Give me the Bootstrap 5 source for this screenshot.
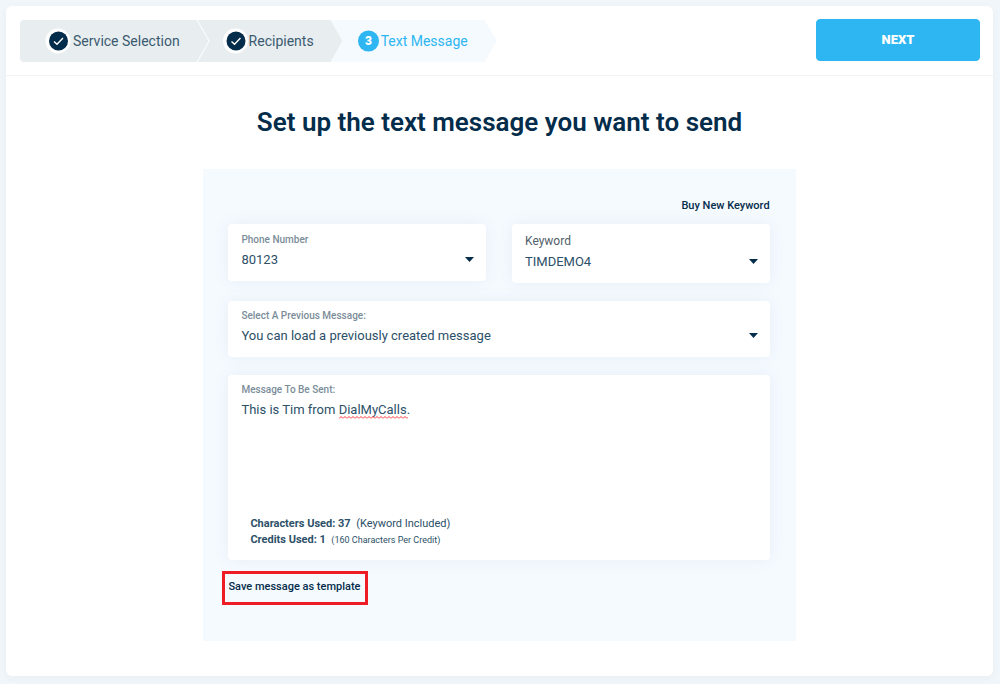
<!DOCTYPE html>
<html lang="en">
<head>
<meta charset="utf-8">
<meta name="viewport" content="width=device-width, initial-scale=1">
<title>Text Message</title>
<link href="https://cdn.jsdelivr.net/npm/bootstrap@5.3.0/dist/css/bootstrap.min.css" rel="stylesheet">
<style>
  :root { --navy: #042c4b; --ink: #2c5068; --sky: #2db6f2; --pale: #f5faff; }
  body { font-family: Roboto, "Liberation Sans", sans-serif; font-size: 14px; line-height: 20px; color: var(--ink); background: #f1f6fa; }
  .page-wrap { padding: 6px 7px 8px 6px; }
  .sheet { border-radius: 6px; box-shadow: 0 2px 8px rgba(20, 60, 80, .04); min-height: calc(100vh - 14px); }
  .top-bar { padding: 13px 13px 13px 14px; border-bottom: 1px solid #f1f4f5; }

  .steps { font-size: 14px; padding-top: 1px; }
  .step { height: 42px; background: #e8edef; clip-path: polygon(0 0, calc(100% - 12px) 0, 100% 50%, calc(100% - 12px) 100%, 0 100%, 12px 50%); padding: 0 29px 0 25px; margin-left: -11px; color: #3b5a70; }
  .step:first-child { clip-path: polygon(0 0, calc(100% - 12px) 0, 100% 50%, calc(100% - 12px) 100%, 0 100%); margin-left: 0; border-radius: 4px 0 0 4px; }
  .step.current { background: var(--pale); color: var(--sky); margin-left: -12px; padding-left: 27px; }
  .step a { color: inherit; }
  .step svg { display: block; }

  .btn-next { --bs-btn-bg: var(--sky); --bs-btn-border-color: var(--sky); --bs-btn-color: #fff; --bs-btn-hover-bg: #1ea6e2; --bs-btn-hover-color: #fff; width: 164px; height: 42px; border-radius: 4px; font-size: 13px; font-weight: 900; }

  h1 { font-size: 26px; line-height: 32px; font-weight: 600; color: var(--navy); margin: 30px 0 31px; }
  .panel { width: 60%; min-width: 300px; margin: 0 auto 35px; padding: 25px 26px 36px 25px; background: #f5faff; }
  .text-link { font-size: 11px; line-height: 20px; font-weight: 500; color: var(--navy); text-decoration: none; }
  .pair { --bs-gutter-x: 26px; }
  .pair, .stacked { margin-bottom: 18px; }
  .cell { background: #fff; border-radius: 4px; box-shadow: 0 0 16px rgba(60, 100, 130, .08); padding: 8px 12px 10px 13px; }
  .cell label { display: block; font-size: 10px; line-height: 16px; font-weight: 500; color: #7b8d99; }
  .cell label.wide-label { font-size: 12px; line-height: 18px; font-weight: 400; color: #52606a; }
  .cell select, .cell textarea { display: block; width: 100%; border: 0; padding: 0; margin: 0; background: transparent; color: var(--ink); font-size: 13px; line-height: 20px; outline: 0; }
  .cell select { height: 23px; appearance: none; background: url("data:image/svg+xml,%3Csvg xmlns='http://www.w3.org/2000/svg' width='9' height='5'%3E%3Cpath d='M0 0h9L4.500 5z' fill='%23042c4b'/%3E%3C/svg%3E") right center no-repeat; }
  .cell textarea { height: 116px; resize: none; }
  .stacked, .message-cell { padding-top: 7px; }
  .message-cell { padding-bottom: 12px; }
  .message-cell label { margin-bottom: 2px; }
  .squiggle { position: absolute; left: 98px; top: 16px; width: 69px; height: 3px; pointer-events: none; }
  .counts { font-size: 11px; line-height: 16px; padding-left: 9px; }
  .counts .note { font-size: 9px; }
  .save-box { border: 3px solid #ee1c25; background: transparent; padding: 3px 5px 5px 3px; margin: 11px 0 0 -6px; }
</style>
</head>
<body>
<div class="page-wrap">
  <main class="sheet bg-white d-flow-root overflow-hidden">
    <header class="top-bar d-flex justify-content-between align-items-start">
      <ol class="steps list-unstyled d-flex mb-0">
        <li class="step d-flex align-items-center">
          <svg width="28" height="26" viewBox="0 0 28 26" aria-hidden="true"><circle cx="13" cy="13" r="12.500" fill="#fff"/><circle cx="13.500" cy="13" r="9.500" fill="#042c4b"/><path d="M9 13.500l3 2.800 6-6.300" fill="none" stroke="#fff" stroke-width="1.400"/></svg>
          <a href="#" class="text-decoration-none">Service Selection</a>
        </li>
        <li class="step d-flex align-items-center">
          <svg width="26" height="26" viewBox="0 0 26 26" aria-hidden="true"><circle cx="12.500" cy="13" r="12.500" fill="#fff"/><circle cx="13" cy="13" r="9.500" fill="#042c4b"/><path d="M8.500 13.500l3 2.800 6-6.300" fill="none" stroke="#fff" stroke-width="1.400"/></svg>
          <a href="#" class="text-decoration-none">Recipients</a>
        </li>
        <li class="step current d-flex align-items-center" aria-current="step">
          <svg width="23" height="22" viewBox="0 0 23 22" aria-hidden="true"><circle cx="10.500" cy="11" r="10.500" fill="#2db6f2"/><text x="10.500" y="15" text-anchor="middle" font-size="12" font-weight="900" fill="#fff">3</text></svg>
          <span>Text Message</span>
        </li>
      </ol>
      <button type="button" class="btn btn-next">NEXT</button>
    </header>

    <h1 class="text-center">Set up the text message you want to send</h1>

    <form class="panel">
      <div class="text-end mb-2"><a href="#" class="text-link">Buy New Keyword</a></div>
      <div class="row pair align-items-start">
        <div class="col-6">
          <div class="cell">
            <label for="phone">Phone Number</label>
            <select id="phone"><option>80123</option></select>
          </div>
        </div>
        <div class="col-6">
          <div class="cell">
            <label for="keyword" class="wide-label">Keyword</label>
            <select id="keyword"><option>TIMDEMO4</option></select>
          </div>
        </div>
      </div>
      <div class="cell stacked">
        <label for="previous">Select A Previous Message:</label>
        <select id="previous"><option>You can load a previously created message</option></select>
      </div>
      <div class="cell message-cell">
        <label for="message">Message To Be Sent:</label>
        <div class="position-relative">
          <textarea id="message" spellcheck="false">This is Tim from DialMyCalls.</textarea>
          <svg class="squiggle" aria-hidden="true"><defs><pattern id="wave" width="4" height="3" patternUnits="userSpaceOnUse"><path d="M0 2.500L2 .5 4 2.500" fill="none" stroke="#f33" stroke-width="1"/></pattern></defs><rect width="100%" height="3" fill="url(#wave)"/></svg>
        </div>
        <div class="counts">
          <div><strong>Characters Used: 37</strong>&nbsp; (Keyword Included)</div>
          <div><strong>Credits Used: 1</strong>&nbsp; <span class="note">(160 Characters Per Credit)</span></div>
        </div>
      </div>
      <button type="button" class="save-box text-link">Save message as template</button>
    </form>
  </main>
</div>
<script src="https://cdn.jsdelivr.net/npm/bootstrap@5.3.0/dist/js/bootstrap.bundle.min.js"></script>
</body>
</html>
